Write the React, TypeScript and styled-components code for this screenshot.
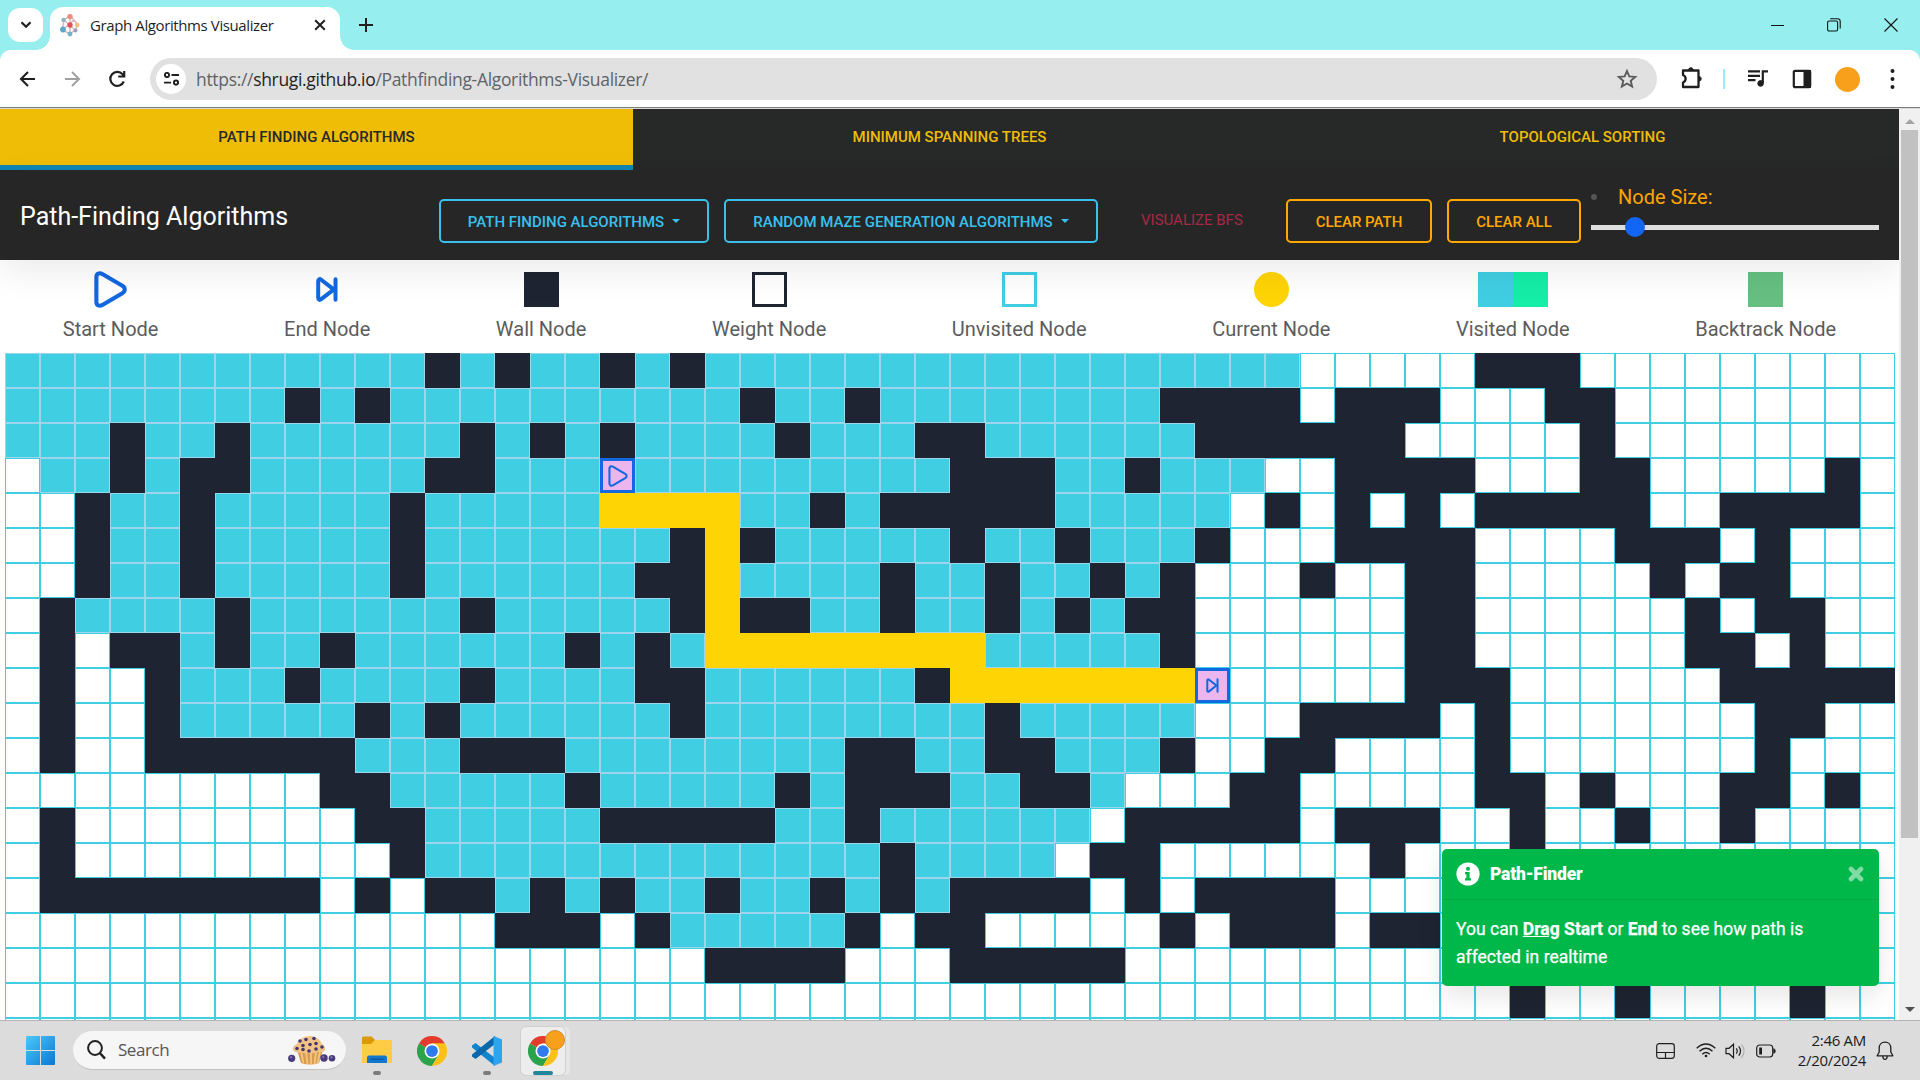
import React from "react";
import styled, { createGlobalStyle } from "styled-components";

const Global = createGlobalStyle`
  * { box-sizing: border-box; }
  html, body { margin: 0; padding: 0; overflow: hidden; background: #fff; }
  button { font: inherit; }
  svg { display: block; flex: none; }
`;

const uiFont = `"Open Sans", "Noto Sans", sans-serif`;

const Screen = styled.div`
  width: 1920px;
  height: 1080px;
  display: flex;
  flex-direction: column;
  overflow: hidden;
  font-family: Roboto, sans-serif;
`;

/* ---------- browser chrome ---------- */

const TabStrip = styled.div`
  height: 50px;
  flex: none;
  display: flex;
  align-items: center;
  background: #96efee;
  padding: 0 22px 0 8px;
`;

const TabSearch = styled.div`
  width: 35px;
  height: 34px;
  border-radius: 12px;
  background: #fff;
  display: flex;
  align-items: center;
  justify-content: center;
`;

const BrowserTab = styled.div`
  position: relative;
  align-self: flex-end;
  width: 290px;
  height: 43px;
  margin-left: 7px;
  padding: 0 14px 7px 10px;
  border-radius: 13px 13px 0 0;
  background: #fff;
  display: flex;
  align-items: center;
  &::before, &::after {
    content: "";
    position: absolute;
    bottom: 0;
    width: 14px;
    height: 14px;
  }
  &::before { left: -14px; background: radial-gradient(circle at 0 0, transparent 13.5px, #fff 14px); }
  &::after { right: -14px; background: radial-gradient(circle at 100% 0, transparent 13.5px, #fff 14px); }
`;

const TabTitle = styled.span`
  margin-left: 10px;
  flex: 1;
  font: 400 15px/20px ${uiFont};
  letter-spacing: -0.39px;
  color: #1f1f1f;
  white-space: nowrap;
`;

const NewTab = styled.div`
  margin-left: 19px;
  flex: 1;
`;

const WindowControls = styled.div`
  display: flex;
  align-items: center;
  gap: 43px;
`;

const ToolbarBack = styled.div`
  background: #96efee;
  flex: none;
`;

const Toolbar = styled.div`
  height: 57px;
  background: #fff;
  border-radius: 11px 11px 0 0;
  display: flex;
  align-items: center;
  padding: 1px 15px 0 16px;
`;

const NavIcons = styled.div`
  display: flex;
  align-items: center;
  gap: 21px;
  width: 134px;
`;

const Omnibox = styled.div`
  width: 1507px;
  height: 42px;
  border-radius: 21px;
  background: #e1e1e1;
  display: flex;
  align-items: center;
  padding: 0 18px 0 6px;
`;

const SiteInfo = styled.div`
  width: 30px;
  height: 30px;
  border-radius: 50%;
  background: #fff;
  display: flex;
  align-items: center;
  justify-content: center;
`;

const Url = styled.span`
  flex: 1;
  margin-left: 10px;
  font: 400 17.5px/24px ${uiFont};
  letter-spacing: -0.32px;
  color: #5f6368;
  b { font-weight: 400; color: #1f1f1f; }
`;

const ToolIcons = styled.div`
  display: flex;
  align-items: center;
  flex: 1;
  padding-left: 22px;
`;

const ToolDivider = styled.div`
  width: 2px;
  height: 20px;
  margin: 0 23px 0 20px;
  background: #96efee;
`;

const Avatar = styled.div`
  width: 25px;
  height: 25px;
  border-radius: 50%;
  margin: 0 30px 0 23px;
  background: #f8a01c;
`;

const ChromeEdge = styled.div`
  height: 2px;
  flex: none;
  background: linear-gradient(#7d7d7d 50%, #dadada 50%);
`;

/* ---------- page ---------- */

const Viewport = styled.div`
  flex: 1;
  min-height: 0;
  display: flex;
`;

const Page = styled.main`
  position: relative;
  width: 1899px;
  overflow: hidden;
  background: #fff;
`;

const AlgoTabs = styled.nav`
  display: flex;
  height: 61px;
  background: #262928;
`;

const AlgoTab = styled.a<{ $active?: boolean }>`
  flex: 1;
  height: 61px;
  padding-top: 18px;
  text-align: center;
  font-size: 15px;
  line-height: 20px;
  font-weight: 500;
  color: ${(p) => (p.$active ? "#262928" : "#efbd06")};
  background: ${(p) => (p.$active ? "#efbd06" : "transparent")};
  border-bottom: 5px solid ${(p) => (p.$active ? "#0f86b4" : "transparent")};
`;

const Navbar = styled.header`
  position: relative;
  z-index: 1;
  height: 90px;
  background: #262626;
  padding: 0 20px;
  display: flex;
  align-items: flex-start;
  box-shadow: 0 12px 35px rgba(0, 0, 0, 0.08);
`;

const Brand = styled.span`
  width: 419px;
  padding-top: 32px;
  color: #fff;
  font-size: 25px;
  line-height: 30px;
`;

const OutlineButton = styled.button<{ $w: number; $tone: string; $gap: number }>`
  width: ${(p) => p.$w}px;
  height: 44px;
  margin: 29px ${(p) => p.$gap}px 0 0;
  padding: 2px 0 0;
  border: 2px solid ${(p) => p.$tone};
  border-radius: 5px;
  background: transparent;
  color: ${(p) => p.$tone};
  font-size: 15px;
  font-weight: 500;
  line-height: 22px;
  white-space: nowrap;
  display: flex;
  align-items: center;
  justify-content: center;
`;

const Caret = styled.i`
  margin: 0 0 2px 8px;
  border: 4.5px solid transparent;
  border-top-color: currentColor;
  border-bottom: 0;
`;

const VisualizeLink = styled.span`
  width: 188px;
  padding: 39px 0 0 43px;
  color: #a52a45;
  font-size: 15px;
  line-height: 22px;
  white-space: nowrap;
`;

const SizeControl = styled.div`
  width: 288px;
  padding-top: 14px;
  display: flex;
  flex-direction: column;
`;

const SizeLabel = styled.label`
  display: flex;
  align-items: center;
  height: 26px;
  gap: 21px;
  font-size: 20px;
  color: #ffa500;
`;

const Bullet = styled.i`
  width: 6px;
  height: 6px;
  border-radius: 50%;
  background: #555;
`;

const Track = styled.div`
  height: 5px;
  margin-top: 15px;
  background: #dedede;
  display: flex;
  align-items: center;
  padding-left: 34px;
`;

const Thumb = styled.div`
  width: 20px;
  height: 20px;
  margin-bottom: 1px;
  flex: none;
  border-radius: 50%;
  background: #1366f5;
`;

const Legend = styled.section`
  height: 93px;
  display: flex;
  justify-content: space-around;
`;

const LegendItem = styled.div`
  padding-top: 12px;
  display: flex;
  flex-direction: column;
  align-items: center;
  font-size: 20px;
  line-height: 30px;
  color: #5c5c5c;
`;

const Swatch = styled.div`
  height: 35px;
  margin-bottom: 7px;
  display: flex;
  align-items: center;
  justify-content: center;
`;

const Block = styled.i<{ $fill?: string; $edge?: string; $round?: boolean }>`
  width: 35px;
  height: 35px;
  background: ${(p) => p.$fill ?? "transparent"};
  border: ${(p) => (p.$edge ? `3px solid ${p.$edge}` : "0")};
  border-radius: ${(p) => (p.$round ? "50%" : "0")};
`;

/* ---------- grid ---------- */

const Grid = styled.section`
  display: grid;
  grid-template-columns: repeat(54, 35px);
  grid-auto-rows: 35px;
  margin-left: 5px;
`;

type Kind = "empty" | "wall" | "seen" | "path" | "start" | "end";
const fills: Record<Kind, string> = {
  empty: "#fff", wall: "#1e2431", seen: "#40cee3", path: "#ffd405", start: "#edb5ee", end: "#edb5ee",
};
const edges: Record<Kind, string> = {
  empty: "1px solid #40cee3", wall: "0", seen: "1px solid #9dd5ea", path: "0",
  start: "3px solid #1268e0", end: "3px solid #1268e0",
};

const Cell = styled.div<{ $kind: Kind }>`
  background: ${(p) => fills[p.$kind]};
  border: ${(p) => edges[p.$kind]};
  display: flex;
  align-items: center;
  justify-content: center;
`;

type Span = number | [number, number];
type Row = { walls: Span[]; seen?: [number, number]; path?: [number, number] };

const rows: Row[] = [
  { walls: [12, 14, 17, 19, [42, 44]], seen: [0, 36] },
  { walls: [8, 10, 21, 24, [33, 36], [38, 40], 44, 45], seen: [0, 32] },
  { walls: [3, 6, 13, 15, 17, 22, 26, 27, [34, 39], 45], seen: [0, 33] },
  { walls: [3, 5, 6, 12, 13, [27, 29], 32, [38, 41], 45, 46, 52], seen: [1, 35] },
  { walls: [2, 5, 11, 23, [25, 29], 36, 38, 40, [42, 46], [49, 52]], seen: [3, 34], path: [17, 20] },
  { walls: [2, 5, 11, 19, 21, 27, 30, 34, [38, 41], [46, 48], 50], seen: [3, 33], path: [20, 20] },
  { walls: [2, 5, 11, 18, 19, 25, 28, 31, 33, 37, 40, 41, 47, 49, 50], seen: [3, 32], path: [20, 20] },
  { walls: [1, 6, 13, 19, 21, 22, 25, 28, 30, 32, 33, 40, 41, 48, 50, 51], seen: [2, 31], path: [20, 20] },
  { walls: [1, 3, 4, 6, 9, 16, 18, 33, 40, 41, 48, 49, 51], seen: [5, 32], path: [20, 27] },
  { walls: [1, 4, 8, 13, 18, 19, 26, [40, 42], [49, 53]], seen: [5, 33], path: [27, 33] },
  { walls: [1, 4, 10, 12, 19, 28, [37, 40], 42, 50, 51], seen: [5, 33] },
  { walls: [1, [4, 9], [13, 15], 24, 25, 28, 29, 33, 36, 37, 42, 50], seen: [10, 32] },
  { walls: [9, 10, 16, 22, [24, 26], 29, 30, 35, 36, 42, 43, 45, 49, 50, 52], seen: [11, 31] },
  { walls: [1, 10, 11, [17, 21], 24, [32, 36], [38, 40], 43, 46, 49], seen: [12, 30] },
  { walls: [1, 11, 25, 31, 32, 39, 43], seen: [12, 29] },
  { walls: [[1, 8], 10, 12, 13, 15, 17, 20, 23, 25, [27, 30], 32, [34, 37]], seen: [14, 26] },
  { walls: [[14, 16], 18, 24, 26, 27, 33, [35, 37], 39, 40], seen: [19, 23] },
  { walls: [[20, 23], [27, 31]] },
  { walls: [43, 46, 51] },
  { walls: [] },
];

const within = (s: Span | undefined, c: number) =>
  s !== undefined && (typeof s === "number" ? s === c : c >= s[0] && c <= s[1]);

const kindAt = (row: Row, r: number, c: number): Kind => {
  if (r === 3 && c === 17) return "start";
  if (r === 9 && c === 34) return "end";
  if (row.walls.some((w) => within(w, c))) return "wall";
  if (within(row.path, c)) return "path";
  return within(row.seen, c) ? "seen" : "empty";
};

const PlayIcon = ({ w, h, stroke = 4 }: { w: number; h: number; stroke?: number }) => (
  <svg width={w} height={h} viewBox="0 0 32 36" preserveAspectRatio="none" fill="none" stroke="#1268e0" strokeWidth={stroke} strokeLinejoin="round">
    <path d="M2.3 6.2C2.3 2.2 5 1.2 8.5 3.2L27.5 14.4C30.6 16.3 30.6 19.7 27.5 21.6L8.5 32.8C5 34.8 2.3 33.8 2.3 29.8Z" />
  </svg>
);

const SkipIcon = ({ w, h, stroke = 4 }: { w: number; h: number; stroke?: number }) => (
  <svg width={w} height={h} viewBox="0 0 22 25" preserveAspectRatio="none" fill="none" stroke="#1268e0" strokeWidth={stroke} strokeLinecap="round" strokeLinejoin="round">
    <path d="M2.2 4.3C2.2 2 3.6 1.5 5.2 2.8L16 11.2C17.1 12.1 17.1 12.9 16 13.8L5.2 22.2C3.6 23.5 2.2 23 2.2 20.7ZM19.5 2.2V22.8" />
  </svg>
);

/* ---------- toast ---------- */

const Toast = styled.aside`
  position: absolute;
  z-index: 2;
  right: 20px;
  bottom: 34px;
  width: 437px;
  height: 137px;
  border-radius: 5px;
  background: #00b74a;
  color: #fff;
  box-shadow: 0 10px 25px rgba(0, 0, 0, 0.1);
`;

const ToastHead = styled.div`
  height: 51px;
  padding: 0 15px 0 14px;
  display: flex;
  align-items: center;
  border-bottom: 1px solid rgba(0, 0, 0, 0.06);
  font-size: 17.5px;
  font-weight: 700;
  letter-spacing: -0.2px;
  strong { flex: 1; margin-left: 10px; }
`;

const ToastBody = styled.p`
  margin: 0;
  padding: 15px 14px;
  font-size: 17.5px;
  line-height: 28px;
  letter-spacing: 0.02px;
  -webkit-text-stroke: 0.25px #fff;
`;

/* ---------- scrollbar ---------- */

const Scrollbar = styled.div`
  width: 21px;
  background: #f0f0f0;
  display: flex;
  flex-direction: column;
  align-items: center;
`;

const Arrow = styled.i<{ $down?: boolean }>`
  margin: ${(p) => (p.$down ? "auto 0 8px" : "10px 0 6px")};
  border: 5px solid transparent;
  ${(p) => (p.$down ? "border-top-color: #505050; border-bottom: 0;" : "border-bottom-color: #a3a3a3; border-top: 0;")}
`;

const ScrollThumb = styled.div`
  width: 17px;
  height: 708px;
  background: #c1c1c1;
`;

/* ---------- taskbar ---------- */

const Taskbar = styled.footer`
  height: 60px;
  flex: none;
  border-top: 1px solid #b4b4b4;
  background: #dcdcdc;
  display: flex;
  align-items: center;
  padding: 0 26px;
`;

const SearchPill = styled.div`
  width: 273px;
  height: 39px;
  margin: 0 10px 0 18px;
  padding: 0 9px 0 14px;
  border-radius: 20px;
  background: #f6f6f6;
  border-bottom: 1px solid #c2c2c2;
  display: flex;
  align-items: center;
  font: 400 17px/24px ${uiFont};
  letter-spacing: -0.45px;
  color: #555;
  span { flex: 1; margin-left: 12px; }
`;

const AppSlot = styled.div<{ $active?: boolean }>`
  position: relative;
  width: ${(p) => (p.$active ? 44 : 42)}px;
  height: 48px;
  margin: 0 ${(p) => (p.$active ? 0 : 13)}px 0 0;
  border-radius: 5px;
  background: ${(p) => (p.$active ? "#ededed" : "transparent")};
  box-shadow: ${(p) => (p.$active ? "0 0 0 1px #d0d0d0, 5px 0 0 #e6e6e6" : "none")};
  padding-top: 9px;
  display: flex;
  flex-direction: column;
  align-items: center;
  &:last-of-type { margin-left: -1px; }
`;

const RunMark = styled.i<{ $wide?: boolean }>`
  margin-top: auto;
  width: ${(p) => (p.$wide ? 20 : 8)}px;
  height: 4px;
  border-radius: 2px;
  background: ${(p) => (p.$wide ? "#22879a" : "#7c7c7c")};
`;

const ProfileBadge = styled.i`
  position: absolute;
  right: 0;
  top: 3px;
  width: 20px;
  height: 20px;
  border-radius: 50%;
  border: 1px solid #c98b33;
  background: #f8a01c;
`;

const Tray = styled.div`
  margin-left: auto;
  display: flex;
  align-items: center;
`;

const Clock = styled.div`
  width: 77px;
  margin: 0 10px 2px 13px;
  font: 400 15px/20px ${uiFont};
  letter-spacing: -0.3px;
  text-align: right;
  white-space: nowrap;
  color: #1b1b1b;
`;

const Gap = styled.span<{ $w: number }>`
  width: ${(p) => p.$w}px;
  flex: none;
`;

const ChromeLogo = () => (
  <svg width="30" height="30" viewBox="0 0 48 48">
    <path d="M24 24L3.2 12A24 24 0 0 1 44.8 12Z" fill="#e33b2e" />
    <path d="M24 24L3.2 12A24 24 0 0 0 24 48L34.4 30Z" fill="#2ba24c" />
    <path d="M24 12H44.8A24 24 0 0 1 24 48L34.4 30Z" fill="#fbc116" />
    <path d="M24 12H44.8L34 26Z" fill="#fbc116" />
    <circle cx="24" cy="24" r="12" fill="#fff" />
    <circle cx="24" cy="24" r="9.4" fill="#2f7bee" />
  </svg>
);

const Muffin = () => (
  <svg width="49" height="30" viewBox="0 0 49 30">
    <path d="M9 15H35L31 28Q22 31 13 28Z" fill="#d99b4f" />
    <path d="M13 17L15.5 28M18 17L19.5 29M23 17V29M28 17L26.5 29M32 17L29.5 28" stroke="#f2c684" strokeWidth="1.8" />
    <path d="M5 15Q4 11 9 9Q13 1 22 1Q30 1 34 9Q38 12 37 15Q35 18 30 17Q22 20 13 17.5Q7 18 5 15Z" fill="#f1c283" />
    <g fill="#47366f">
      {[[12, 6], [18, 4.5], [26, 3.5], [15, 10.5], [22, 9.5], [28, 8.5], [9, 13.5], [15, 14.5], [21, 16], [28, 14], [34, 12]].map(([x, y]) => (
        <circle key={`${x}-${y}`} cx={x} cy={y} r="1.8" />
      ))}
    </g>
    <g fill="#4b3d7c">
      <circle cx="3.7" cy="23.3" r="3.6" />
      <circle cx="36" cy="23" r="3.7" />
      <circle cx="44" cy="23.3" r="3.3" />
    </g>
    <g fill="#8a80b5">
      <circle cx="3" cy="22.3" r="1" />
      <circle cx="35.2" cy="22" r="1" />
      <circle cx="43.4" cy="22.3" r="1" />
    </g>
  </svg>
);

const ink = "#1f1f1f";

export default function App() {
  return (
    <Screen>
      <Global />
      <TabStrip>
        <TabSearch>
          <svg width="12" height="8" viewBox="0 0 12 8" fill="none" stroke={ink} strokeWidth="2.2"><path d="M1.5 1.2L6 5.8L10.5 1.2" /></svg>
        </TabSearch>
        <BrowserTab>
          <svg width="20" height="24" viewBox="0 0 20 24">
            <path d="M10 3L4 7L2.5 17L10 21L15 17L18 12L14 7ZM10 3V21M4 7L15 17M14 7L2.5 17" stroke="#d9b9bc" fill="none" strokeWidth="1.5" />
            <circle cx="10" cy="3.6" r="2.7" fill="#f08a7a" />
            <circle cx="3.6" cy="7" r="2.3" fill="#8fb4c8" />
            <circle cx="3" cy="16.5" r="2.9" fill="#5fa7c4" />
            <circle cx="10" cy="21" r="2.4" fill="#6fb4cf" />
            <circle cx="15.5" cy="17.5" r="2" fill="#9a9fb8" />
            <circle cx="17.2" cy="12" r="2.3" fill="#f3bd7e" />
            <circle cx="10" cy="12" r="2.7" fill="#e8505b" />
          </svg>
          <TabTitle>Graph Algorithms Visualizer</TabTitle>
          <svg width="12" height="12" viewBox="0 0 12 12" stroke={ink} strokeWidth="2"><path d="M1.2 1.2L10.8 10.8M10.8 1.2L1.2 10.8" /></svg>
        </BrowserTab>
        <NewTab>
          <svg width="14" height="14" viewBox="0 0 14 14" stroke={ink} strokeWidth="2"><path d="M7 0V14M0 7H14" /></svg>
        </NewTab>
        <WindowControls>
          <svg width="14" height="14" viewBox="0 0 14 14" stroke="#111"><path d="M1 7.5H14" /></svg>
          <svg width="14" height="14" viewBox="0 0 14 14" fill="none" stroke="#111" strokeWidth="1.1"><rect x="0.6" y="3" width="10" height="10" rx="1.5" /><path d="M3.2 .8H10.5Q13.2 .8 13.2 3.5V10.5" /></svg>
          <svg width="14" height="14" viewBox="0 0 14 14" stroke="#111" strokeWidth="1.1"><path d="M.5 .5L13.5 13.5M13.5 .5L.5 13.5" /></svg>
        </WindowControls>
      </TabStrip>

      <ToolbarBack>
        <Toolbar>
          <NavIcons>
            <svg width="24" height="24" viewBox="0 0 24 24" fill="none" stroke={ink} strokeWidth="2.1"><path d="M19 12H5.5M12 5L5 12L12 19" /></svg>
            <svg width="24" height="24" viewBox="0 0 24 24" fill="none" stroke="#a0a0a0" strokeWidth="2"><path d="M4 12H17.5M11 5L18 12L11 19" /></svg>
            <svg width="24" height="24" viewBox="0 0 24 24" fill="none" stroke={ink} strokeWidth="2.2"><path d="M17.8 14.5A7 7 0 1 1 16.7 7.4L18 9M18.2 4V9.5H12.2" /></svg>
          </NavIcons>
          <Omnibox>
            <SiteInfo>
              <svg width="17" height="14" viewBox="0 0 17 14" fill="none" stroke={ink} strokeWidth="1.9"><circle cx="4" cy="3" r="2.1" /><path d="M8.5 3H16M1 10.6H8" /><circle cx="13" cy="10.6" r="2.1" /></svg>
            </SiteInfo>
            <Url>https://<b>shrugi.github.io</b>/Pathfinding-Algorithms-Visualizer/</Url>
            <svg width="24" height="24" viewBox="0 0 24 24" fill="none" stroke="#5a5a5a" strokeWidth="1.9"><path d="M12 4L14.3 9.4L20.2 9.9L15.7 13.8L17.1 19.6L12 16.5L6.9 19.6L8.3 13.8L3.8 9.9L9.7 9.4Z" /></svg>
          </Omnibox>
          <ToolIcons>
            <svg width="24" height="28" viewBox="0 0 24 28" fill="none" stroke={ink} strokeWidth="2.3" strokeLinejoin="round"><path d="M4 5.5H19.5V22H4V17.5C7.5 16 7.5 11.5 4 10Z" /><path d="M9.5 4.6A2.4 2.4 0 0 1 14.2 4.6Z M20.3 11.4A2.4 2.4 0 0 1 20.3 16.1Z" fill={ink} strokeWidth="1" /></svg>
            <ToolDivider />
            <svg width="21" height="21" viewBox="0 0 21 21" fill="none" stroke={ink} strokeWidth="2.2"><path d="M0 2.4H12M0 6.8H12M0 11.2H7.5M14.8 14V2.4H20" /><circle cx="12.6" cy="14.4" r="2.8" fill={ink} strokeWidth="1" /></svg>
            <Gap $w={23} />
            <svg width="20" height="20" viewBox="0 0 20 20"><rect x="1.8" y="1.8" width="16.4" height="16.4" rx="1.2" fill="none" stroke={ink} strokeWidth="2.2" /><path d="M11.5 1H19V19H11.5Z" fill={ink} /></svg>
            <Avatar />
            <svg width="5" height="20" viewBox="0 0 5 20" fill={ink}><circle cx="2.5" cy="2" r="2" /><circle cx="2.5" cy="10" r="2" /><circle cx="2.5" cy="18" r="2" /></svg>
          </ToolIcons>
        </Toolbar>
      </ToolbarBack>
      <ChromeEdge />

      <Viewport>
        <Page>
          <AlgoTabs>
            <AlgoTab $active>PATH FINDING ALGORITHMS</AlgoTab>
            <AlgoTab>MINIMUM SPANNING TREES</AlgoTab>
            <AlgoTab>TOPOLOGICAL SORTING</AlgoTab>
          </AlgoTabs>
          <Navbar>
            <Brand>Path-Finding Algorithms</Brand>
            <OutlineButton $w={270} $gap={15} $tone="#39c0ed">PATH FINDING ALGORITHMS<Caret /></OutlineButton>
            <OutlineButton $w={374} $gap={0} $tone="#39c0ed">RANDOM MAZE GENERATION ALGORITHMS<Caret /></OutlineButton>
            <VisualizeLink>VISUALIZE BFS</VisualizeLink>
            <OutlineButton $w={146} $gap={15} $tone="#ffa900">CLEAR PATH</OutlineButton>
            <OutlineButton $w={134} $gap={10} $tone="#ffa900">CLEAR ALL</OutlineButton>
            <SizeControl>
              <SizeLabel><Bullet />Node Size:</SizeLabel>
              <Track><Thumb /></Track>
            </SizeControl>
          </Navbar>
          <Legend>
            <LegendItem><Swatch><PlayIcon w={33} h={37} /></Swatch>Start Node</LegendItem>
            <LegendItem><Swatch><SkipIcon w={22} h={25} /></Swatch>End Node</LegendItem>
            <LegendItem><Swatch><Block $fill="#1e2431" /></Swatch>Wall Node</LegendItem>
            <LegendItem><Swatch><Block $edge="#1e2431" /></Swatch>Weight Node</LegendItem>
            <LegendItem><Swatch><Block $edge="#40cee3" /></Swatch>Unvisited Node</LegendItem>
            <LegendItem><Swatch><Block $fill="#ffd405" $round /></Swatch>Current Node</LegendItem>
            <LegendItem><Swatch><Block $fill="#40cee3" /><Block $fill="#15eea7" /></Swatch>Visited Node</LegendItem>
            <LegendItem><Swatch><Block $fill="#66bf80" /></Swatch>Backtrack Node</LegendItem>
          </Legend>
          <Grid>
            {rows.map((row, r) =>
              Array.from({ length: 54 }, (_, c) => {
                const kind = kindAt(row, r, c);
                return (
                  <Cell key={`${r}-${c}`} $kind={kind}>
                    {kind === "start" && <PlayIcon w={20} h={22} stroke={3.3} />}
                    {kind === "end" && <SkipIcon w={13} h={15} stroke={3.4} />}
                  </Cell>
                );
              })
            )}
          </Grid>
          <Toast>
            <ToastHead>
              <svg width="24" height="24" viewBox="0 0 24 24"><circle cx="12" cy="12" r="11.6" fill="#fff" /><circle cx="12" cy="6.7" r="2" fill="#00b74a" /><path d="M9 10H13.6V16.2H15V18.4H9V16.2H10.4V12.2H9Z" fill="#00b74a" /></svg>
              <strong>Path-Finder</strong>
              <svg width="16" height="16" viewBox="0 0 16 16" stroke="#80dba5" strokeWidth="4.6" strokeLinecap="round"><path d="M3 3L13 13M13 3L3 13" /></svg>
            </ToastHead>
            <ToastBody>
              You can <b><u>Drag</u> Start</b> or <b>End</b> to see how path is<br />affected in realtime
            </ToastBody>
          </Toast>
        </Page>
        <Scrollbar>
          <Arrow />
          <ScrollThumb />
          <Arrow $down />
        </Scrollbar>
      </Viewport>

      <Taskbar>
        <svg width="29" height="29" viewBox="0 0 29 29">
          <defs><linearGradient id="win" x1="0" y1="0" x2="1" y2="1" gradientUnits="objectBoundingBox"><stop offset="0" stopColor="#4cc8f8" /><stop offset="1" stopColor="#0a78d4" /></linearGradient></defs>
          <path d="M0 1Q0 0 1 0H14V14H0ZM15 0H28Q29 0 29 1V14H15ZM0 15H14V29H1Q0 29 0 28ZM15 15H29V28Q29 29 28 29H15Z" fill="url(#win)" />
        </svg>
        <SearchPill>
          <svg width="19" height="20" viewBox="0 0 19 20" fill="none" stroke="#222" strokeWidth="2"><circle cx="8" cy="8" r="6.9" /><path d="M12.8 13L18 18.6" strokeWidth="2.5" /></svg>
          <span>Search</span>
          <Muffin />
        </SearchPill>
        <AppSlot>
          <svg width="30" height="28" viewBox="0 0 30 28">
            <path d="M0 2Q0 .5 1.5 .5H9.5L13 4V9H0Z" fill="#dc9a07" />
            <path d="M0 8H9L13 4H29Q30 4 30 5V27H0Z" fill="#ffcd45" />
            <path d="M5 27V21.5Q5 19.5 7 19.5H23Q25 19.5 25 21.5V27Z" fill="#1378cb" />
            <path d="M8.5 23.2H21.5" stroke="#0a4f91" />
          </svg>
          <RunMark />
        </AppSlot>
        <AppSlot><ChromeLogo /></AppSlot>
        <AppSlot>
          <svg width="30" height="30" viewBox="0 0 30 30">
            <path d="M0 9.5L3.5 7L23 22V30L0 11.5Z" fill="#1183cf" />
            <path d="M0 20.5L3.5 23L23 8V0L0 18.5Z" fill="#0868ab" />
            <path d="M21.5 0L30 3.5V26.5L21.5 30Z" fill="#2aa5f2" />
          </svg>
          <RunMark />
        </AppSlot>
        <AppSlot $active><ChromeLogo /><ProfileBadge /><RunMark $wide /></AppSlot>
        <Tray>
          <svg width="19" height="16" viewBox="0 0 19 16" fill="none" stroke={ink} strokeWidth="1.2"><rect x=".7" y=".7" width="17.6" height="14.6" rx="2.5" /><path d="M.7 9.5H18.3M9.5 9.5V15" /></svg>
          <Gap $w={21} />
          <svg width="20" height="15" viewBox="0 0 20 15" fill="none" stroke={ink} strokeWidth="1.4"><path d="M.7 5.3Q10-3.2 19.3 5.3M3.5 8.3Q10 2.4 16.5 8.3M6.3 11.2Q10 8 13.7 11.2" /><circle cx="10" cy="13" r="1.3" fill={ink} stroke="none" /></svg>
          <Gap $w={9} />
          <svg width="22" height="16" viewBox="0 0 22 16" fill="none" stroke={ink} strokeWidth="1.2"><path d="M1 5.3H4L8.5 1.2V14.8L4 10.7H1ZM11.3 5.3Q13.2 8 11.3 10.7M13.8 3.3Q17.2 8 13.8 12.7" /><path d="M16.5 1.3Q21.5 8 16.5 14.7" stroke="#b0b0b0" /></svg>
          <Gap $w={9} />
          <svg width="20" height="14" viewBox="0 0 20 14" fill="none" stroke={ink} strokeWidth="1.2"><rect x=".7" y="1" width="16" height="12" rx="3" /><path d="M3.2 3.5H6V10.5H3.2Z" fill={ink} stroke="none" /><path d="M17.3 4.5H18.3Q19.7 5.5 19.7 7T18.3 9.5H17.3Z" fill={ink} stroke="none" /></svg>
          <Clock>2:46 AM<br />2/20/2024</Clock>
          <svg width="18" height="20" viewBox="0 0 18 20" fill="none" stroke={ink} strokeWidth="1.3" strokeLinejoin="round"><path d="M9 1.2C5.2 1.2 3.2 4 3.2 7.2V11L1.2 14.8H16.8L14.8 11V7.2C14.8 4 12.8 1.2 9 1.2ZM6.8 15.5Q7 18.3 9 18.3T11.2 15.5" /></svg>
        </Tray>
      </Taskbar>
    </Screen>
  );
}
